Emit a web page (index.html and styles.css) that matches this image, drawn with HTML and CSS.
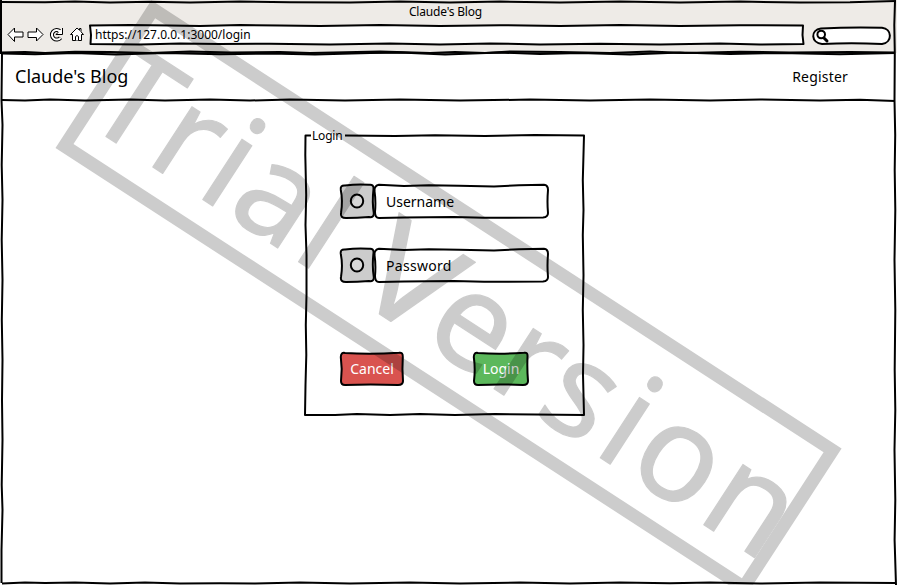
FILE: index.html
```html
<!DOCTYPE html>
<html lang="en">
<head>
<meta charset="utf-8">
<title>Claude's Blog</title>
<link rel="stylesheet" href="styles.css">
</head>
<body>
<div class="window">
  <header class="chrome">
    <div class="title"><span>Claude's Blog</span></div>
    <div class="toolbar">
      <svg class="icons" width="80" height="20" viewBox="0 0 80 20">
        <path d="M1 9.500 7.500 3v4H16v5H7.500v4.500z"/>
        <path d="M36 9.500 29.500 3v4H21v5.500h8.500V16z"/>
        <path class="reload-line" d="M53 6.300A4.800 4.800 0 1 0 53.500 12.800"/>
        <path class="reload-core" d="M53 6.300A4.800 4.800 0 1 0 53.500 12.800"/>
        <path d="M55.500 3v6.500h-6.500l2.300-2.300"/>
        <path class="reload-core" d="M51.500 5.500 54 7.500"/>
        <path d="M63.500 9.500 70 3l2.500 2.300V3.500H74v3.300l2.500 2.700h-2v6h-9v-6z"/>
        <path d="M68.500 15.500v-4q1.500-2 3 0v4"/>
      </svg>
      <div class="address">
        <svg class="sketch" width="714" height="20" viewBox="0 0 714 20"><path d="M0 .500 40 0 80 .500 110 1 150 0 190 .500 230 .900 290 0 350 .900 410 .200 470 .900 530 .100 590 .900 650 .200 713 .500 712.500 10 713.500 19 670 19.500 630 18.500 570 19.500 510 18.700 450 19.400 400 18.500 350 19.400 300 18.600 240 19.500 180 18.700 130 19 90 18.500 50 19.500 .500 19 1 10z"/></svg>
        <span>https://127.0.0.1:3000/login</span>
      </div>
      <div class="search">
        <svg class="sketch" width="78" height="18" viewBox="0 0 78 18"><path d="M8 1.500Q38 0 69 .800C79 2 80 15 69 17Q38 15.500 9 17C-2 16 -3 3 8 1.500z"/><circle cx="8.200" cy="7.500" r="3.800"/><path class="handle" d="m11 11 3 3"/></svg>
      </div>
    </div>
  </header>
  <nav class="navbar">
    <span class="brand">Claude's Blog</span>
    <span class="register">Register</span>
  </nav>
  <main class="page">
    <section class="login">
      <svg class="sketch" width="280" height="281" viewBox="0 0 280 281"><path d="M6 .500H.500L.300 20 1.200 60 .500 90 1.500 120 1.500 160 .800 190 1.300 220 .500 250 0 280 30 280 52 279 85 280 115 279 150 280 190 279 230 279.500 279 280 278 240 278.500 210 277.800 175 278.500 140 277.800 100 278.500 75 277.800 45 279 .500 230 0 180 .900 130 .300 90 .900 40 .500"/></svg>
      <h1>Login</h1>
      <div class="field">
        <div class="addon"><svg class="sketch" width="35" height="35" viewBox="0 0 35 35"><path d="M5 1.500Q17 0 29 .800Q34 0 33.500 5Q32 18 33.800 29Q34 34 29 33Q17 34 6 34Q0 34 1 29Q3 17 .800 6Q0 1 5 1.500z"/><ellipse class="hollow" cx="17" cy="17" rx="6.200" ry="6.500"/></svg></div>
        <div class="input"><svg class="sketch" width="175" height="35" viewBox="0 0 175 35"><path d="M5 .800 30 2 55 1.300 85 1.800 120 2.500 145 1.200 170 .800Q174 1 174 6Q173 18 174 29Q174 33 169 33.500L110 33.800 80 33 30 33.500 5 34Q1 34 1 28Q2 17 .500 7Q0 2 5 .800z"/></svg><span>Username</span></div>
      </div>
      <div class="field">
        <div class="addon"><svg class="sketch" width="35" height="35" viewBox="0 0 35 35"><path d="M5 1.500Q17 0 29 .800Q34 0 33.500 5Q32 18 33.800 29Q34 34 29 33Q17 34 6 34Q0 34 1 29Q3 17 .800 6Q0 1 5 1.500z"/><ellipse class="hollow" cx="17" cy="17" rx="6.200" ry="6.500"/></svg></div>
        <div class="input"><svg class="sketch" width="175" height="35" viewBox="0 0 175 35"><path d="M5 .800 30 2 55 1.300 85 1.800 120 2.500 145 1.200 170 .800Q174 1 174 6Q173 18 174 29Q174 33 169 33.500L110 33.800 80 33 30 33.500 5 34Q1 34 1 28Q2 17 .500 7Q0 2 5 .800z"/></svg><span class="wide">Password</span></div>
      </div>
      <div class="actions">
        <div class="button cancel"><svg class="sketch" width="64" height="34" viewBox="0 0 64 34"><path d="M5 1Q30 2.500 59 .800Q63 0 62.800 5Q62 17 63 29Q63 33 58 33Q30 32 5 33Q1 33 1 29Q2.500 17 .800 5Q1 0 5 1z"/></svg><span>Cancel</span></div>
        <div class="button submit"><svg class="sketch" width="56" height="34" viewBox="0 0 56 34"><path d="M5 1Q27 2.500 51 .800Q55 0 54.500 5Q54 17 55 29Q55 33 50 33Q27 32 5 33Q1 33 1 29Q2.500 17 .800 5Q1 0 5 1z"/></svg><span>Login</span></div>
      </div>
    </section>
  </main>
  <svg class="frame" width="897" height="585" viewBox="0 0 897 585">
    <path d="M1 2 45 2.300 75 1.500 110 2.500 150 1.700 190 2.400 240 1.600 290 2.300 350 2.500 400 1.600 450 2.400 500 1.600 560 2.400 620 1.600 680 2.400 740 1.600 800 2.400 850 2.300 896 1"/>
    <path class="edge" d="M1 0V54"/>
    <path class="gap" d="M2 53H895"/>
    <path d="M1 52.500 25 52 45 53 75 51.700 110 52 150 53 190 51.500 230 52.500 280 52 310 53 380 51.500 430 53 455 52 485 53 510 51.500 560 52 610 53 650 51.600 685 53 740 51.700 790 52.500 850 52 895 52.500"/>
    <path d="M2 53.500 35 54.200 75 53 115 54.500 165 53 220 54.200 270 53.500 315 54.500 370 53 400 52.500 445 54.500 500 52.500 540 54 580 53 630 54.500 680 52.500 730 54 780 53 840 54.200 895 53"/>
    <path d="M2 100 25 100.500 50 99.500 85 100.500 130 99.500 165 100.500 210 99.600 250 100.500 290 99.500 345 100.500 400 99.600 460 100.500 530 99.600 590 100.500 650 99.500 710 100.500 760 99.500 820 100.500 860 99.800 895 101"/>
    <path d="M2 54 1.500 100 2.500 125 1.700 165 2.500 200 1.700 240 2.500 280 1.800 320 2.500 360 2 400 2.500 440 1.700 485 2.500 510 1.500 550 1.500 583"/>
    <path d="M2 583.500 25 582.500 45 583 75 582.500 110 583.500 145 582.500 180 583.500 220 583.200 255 583.500 300 582.500 350 583.500 410 582.500 460 583.500 520 582.500 570 583.500 620 582.500 670 583.300 710 582.500 760 583.500 820 582.500 896 583"/>
    <path d="M895 1 894.300 25 894.800 53 894.500 100 895.200 135 894.700 170 895.300 210 894.500 260 895.300 310 894.700 370 895.300 410 894.500 450 895.300 500 894.600 540 896 585"/>
  </svg>
  <svg class="watermark" width="897" height="585" viewBox="0 0 897 585">
    <g transform="translate(151.500 1) rotate(33)">
      <rect x="6" y="6" width="810" height="163"/>
      <text y="138.500" x="4.400 80 139.600 176 254">Trial</text>
      <text y="138.500" transform="translate(323 0) scale(1.130 1)">V</text>
      <text y="138.500" x="409.500 487 543 613.700 652 737">ersion</text>
    </g>
  </svg>
</div>
</body>
</html>
```
FILE: styles.css
```css
* { box-sizing: border-box; }
body {
  margin: 0;
  overflow: hidden;
  font-family: "Noto Sans", "Open Sans", sans-serif;
  color: #000;
  background: #fff;
}
.window {
  position: relative;
  width: 897px;
  height: 585px;
  display: flex;
  flex-direction: column;
}
svg {
  fill: none;
  stroke: #000;
  stroke-width: 2;
  overflow: visible;
  stroke-linejoin: round;
}
.chrome {
  height: 53px;
  background: #eeebe7;
  display: flex;
  flex-direction: column;
}
.title {
  height: 25px;
  padding-right: 6px;
  text-align: center;
  font-size: 12px;
  line-height: 24px;
  letter-spacing: -0.2px;
}
.toolbar {
  display: flex;
  align-items: flex-start;
  padding-left: 7px;
}
.icons {
  stroke-width: 1;
  fill: #fff;
}
.icons .reload-line { fill: none; stroke-width: 4; }
.icons .reload-core { fill: none; stroke: #fff; stroke-width: 2; }
.address {
  position: relative;
  width: 714px;
  height: 20px;
  margin-left: 3px;
  padding-left: 5px;
  font-size: 12px;
  line-height: 19px;
}
.sketch {
  position: absolute;
  left: 0;
  top: 0;
}
.address .sketch, .search .sketch { fill: #fff; }
.sketch ~ span, .sketch ~ h1 { position: relative; }
.search {
  position: relative;
  width: 78px;
  height: 18px;
  margin: 2px 0 0 9px;
}
.search .handle { stroke-width: 3; stroke-linecap: round; }
.navbar {
  height: 47px;
  display: flex;
  align-items: center;
  justify-content: space-between;
  padding: 0 49px 1px 15px;
}
.brand { font-size: 18px; }
.register { font-size: 14px; letter-spacing: 0.2px; }
.page {
  flex: 1;
  padding: 35px 0 0 305px;
}
.login {
  position: relative;
  width: 280px;
  height: 281px;
  padding: 49px 0 0 35px;
}
.login .sketch ~ h1 {
  position: absolute;
  left: 7px;
  top: -9px;
  margin: 0;
  font-size: 12px;
  font-weight: 400;
  line-height: 19px;
  letter-spacing: -0.2px;
}
.field {
  display: flex;
  height: 35px;
  margin-bottom: 29px;
}
.addon {
  position: relative;
  width: 34px;
}
.addon .sketch { fill: #ccc; }
.addon .hollow { fill: #d6d6d6; }
.input {
  position: relative;
  width: 175px;
  padding-left: 12px;
  font-size: 14px;
  line-height: 35px;
}
.input .wide { letter-spacing: 0.3px; }
.actions {
  display: flex;
  gap: 69px;
  padding-top: 40px;
}
.button {
  position: relative;
  height: 34px;
  text-align: center;
  font-size: 14px;
  line-height: 34px;
  color: #fff;
}
.cancel { width: 64px; }
.submit { width: 56px; }
.cancel .sketch { fill: #d9534f; }
.submit .sketch { fill: #5cb85c; }
.frame, .watermark {
  position: absolute;
  left: 0;
  top: 0;
  pointer-events: none;
}
.frame .gap { stroke: #888; }
.watermark {
  overflow: hidden;
  opacity: 0.195;
}
.watermark rect { stroke-width: 13; stroke-linejoin: miter; }
.watermark text {
  fill: #000;
  stroke-width: 1.2;
  font-size: 134px;
}
```
